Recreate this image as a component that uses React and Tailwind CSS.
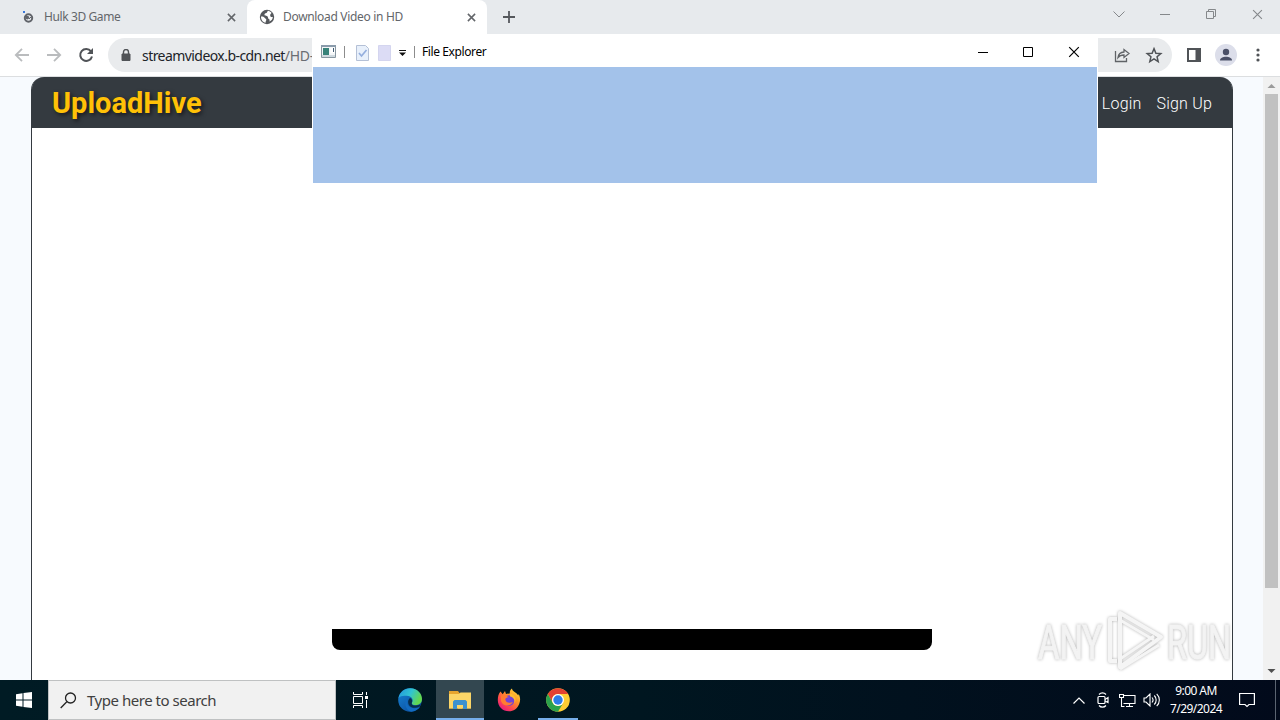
import React from 'react';

const Globe = ({ className }) => (
  <svg viewBox="0 0 16 16" className={className}>
    <circle cx="8" cy="8" r="7.2" fill="#55585c" />
    <path d="M9 1.8c-1.2.8-.4 1.8-1.6 2.3-1.4.4-2.3 1-1.8 2.2.7 1 2.2.2 3 1.2.7 1 0 1.8 1.2 2.4 1.2.4 1 1.5.4 2.6 2.400-.7 3.600-2.500 3.700-4.700-1.400.6-2.600-.2-2.700-1.400-.1-1.200 1-1.500 1.300-2.600C11.500 2.600 10.300 2 9 1.800z" fill="#fff" />
    <path d="M2 7.400c1.600-.1 3 .3 3.600 1.300.5 1 1.700.8 1.700 2 0 1-.8 1.300-.7 3C3.800 13.200 1.900 10.600 2 7.400z" fill="#fff" />
  </svg>
);

const Cross = ({ className }) => (
  <svg viewBox="0 0 10 10" className={className} fill="none" stroke="currentColor">
    <path d="M1 1l8 8M9 1L1 9" />
  </svg>
);

const TabStrip = () => (
  <div className="flex h-[34px] shrink-0 bg-[#e7eaed] text-[12px] text-[#63666a]">
    <div className="flex h-[34px] w-[247px] items-center pl-[21px]">
      <svg viewBox="0 0 14 14" className="h-[14px] w-[14px]">
        <circle cx="7.500" cy="8" r="3.700" fill="none" stroke="#606369" strokeWidth="2" />
        <path d="M5 6l3 1-1 2-2-.5zM8 9l2-2" fill="#606369" stroke="#606369" />
        <path d="M2 1h2v2H2z" fill="#3b78d8" />
      </svg>
      <span className="ml-[9px] w-[183px] whitespace-nowrap tracking-[-0.400px]">Hulk 3D Game</span>
      <Cross className="h-[9px] w-[9px] stroke-[1.700]" />
    </div>
    <div className="flex h-[34px] w-[240px] items-center rounded-t-[8px] bg-white pl-[12px]">
      <Globe className="h-4 w-4" />
      <span className="ml-[8px] w-[184px] whitespace-nowrap tracking-[-0.320px]">Download Video in HD</span>
      <Cross className="h-[9px] w-[9px] stroke-[1.700]" />
    </div>
    <svg viewBox="0 0 12 12" className="ml-[16px] mt-[11px] h-3 w-3" stroke="#55585c" strokeWidth="1.800">
      <path d="M6 0v12M0 6h12" />
    </svg>
    <div className="ml-auto flex h-[28px] items-center pr-[17px] text-[#85888b]">
      <svg viewBox="0 0 12 8" className="h-2 w-3" fill="none" stroke="currentColor"><path d="M.5 1.500L6 7l5.500-5.500" /></svg>
      <svg viewBox="0 0 10 10" className="ml-[35px] h-[10px] w-[10px]" stroke="currentColor"><path d="M0 5.500h10" /></svg>
      <svg viewBox="0 0 10 10" className="ml-[36px] h-[10px] w-[10px]" fill="none" stroke="currentColor">
        <path d="M.5 2.500h7v7h-7zM2.500 2.500v-2h7v7h-2" />
      </svg>
      <Cross className="ml-[36px] h-[11px] w-[11px]" />
    </div>
  </div>
);

const Toolbar = () => (
  <div className="flex h-[43px] shrink-0 items-center border-b border-[#dcdee0] bg-white pl-[14px]">
    <svg viewBox="0 0 16 16" className="h-4 w-4" fill="none" stroke="#babcbe" strokeWidth="1.800"><path d="M15 8H2M8 1.800L1.800 8 8 14.200" /></svg>
    <svg viewBox="0 0 16 16" className="ml-[16px] h-4 w-4" fill="none" stroke="#babcbe" strokeWidth="1.800"><path d="M1 8h13M8 1.800L14.200 8 8 14.200" /></svg>
    <svg viewBox="0 0 16 16" className="ml-[16px] h-4 w-4" fill="none" stroke="#505357" strokeWidth="2">
      <path d="M13 4.300A6 6 0 1 0 14 9.500" />
      <path d="M15 1v6H9z" fill="#505357" stroke="none" />
    </svg>
    <div className="ml-[14px] flex h-[34px] w-[1064px] items-center rounded-full bg-[#e9ebed] pl-[13px] pr-[9px]">
      <svg viewBox="0 0 10 12" className="h-3 w-[10px]">
        <path d="M1 5h8v6.500H1z" fill="#505357" stroke="#505357" strokeWidth="1" />
        <path d="M2.500 5V3a2.500 2.500 0 0 1 5 0v2" fill="none" stroke="#505357" strokeWidth="1.400" />
      </svg>
      <span className="ml-[11px] whitespace-nowrap text-[14px] tracking-[-0.560px] text-[#202328]">
        streamvideox.b-cdn.net<span className="tracking-[-0.300px] text-[#696d72]">/HD-</span>
      </span>
      <svg viewBox="0 0 16 16" className="ml-auto h-4 w-4" fill="none" stroke="#606367" strokeWidth="1.300">
        <path d="M1.500 4v10.500h11V11M4 10.500c.5-3.800 2.500-5.300 6-5.500V2.500L15 6.500l-5 4V8c-3 0-4.600.8-6 2.500z" />
      </svg>
      <svg viewBox="0 0 24 24" className="ml-[15px] h-[18px] w-[18px]" fill="none" stroke="#505357" strokeWidth="2">
        <path d="M12 3.500l2.500 6.100 6.600.5-5 4.300 1.500 6.400-5.600-3.500-5.600 3.500 1.500-6.400-5-4.300 6.600-.5z" />
      </svg>
    </div>
    <svg viewBox="0 0 14 14" className="ml-[15px] h-[14px] w-[14px]"><path d="M0 0h14v14H0z" fill="#505357" /><path d="M2 2h6.500v10H2z" fill="#fff" /></svg>
    <svg viewBox="0 0 22 22" className="ml-[14px] h-[22px] w-[22px]">
      <circle cx="11" cy="11" r="11" fill="#dcdeea" />
      <circle cx="11" cy="8" r="3.200" fill="#4b5068" />
      <path d="M5 16.500c0-5 12-5 12 0z" fill="#4b5068" />
    </svg>
    <svg viewBox="0 0 4 14" className="ml-[19px] h-[14px] w-1" fill="#505357">
      <circle cx="2" cy="2" r="1.600" /><circle cx="2" cy="7" r="1.600" /><circle cx="2" cy="12" r="1.600" />
    </svg>
  </div>
);

const Page = () => (
  <div className="flex min-h-0 flex-1 bg-[#f7fafe] pl-[31px]">
    <div className="flex w-[1202px] flex-col rounded-t-[13px] border-x border-[#343a40] bg-white">
      <div className="flex h-[51px] shrink-0 items-center rounded-t-[12px] bg-[#343a40] pl-[20px] pr-[20px]">
        <span className="pt-[2px] font-[Roboto] text-[29px] font-bold leading-none text-[#ffc107] [text-shadow:2px_2px_4px_rgba(0,0,0,0.6)]">UploadHive</span>
        <div className="ml-auto flex gap-[15px] pt-[2px] font-[Roboto] text-[16px] font-light tracking-[0.200px] text-white">
          <span>Login</span>
          <span>Sign Up</span>
        </div>
      </div>
      <div className="flex flex-1 flex-col pl-[300px] pt-[372px]">
        <div className="h-[150px] w-[600px] rounded-[8px] bg-black" />
      </div>
    </div>
    <div className="ml-auto flex w-[17px] flex-col items-center bg-[#f1f1f1]">
      <svg viewBox="0 0 17 17" className="h-[17px] w-[17px]"><path d="M4.500 11h8l-4-4z" fill="#9b9b9b" /></svg>
      <div className="h-[494px] w-[13px] bg-[#c1c1c1]" />
      <svg viewBox="0 0 17 17" className="mt-auto h-[17px] w-[17px]"><path d="M4.500 6h8l-4 4z" fill="#505050" /></svg>
    </div>
  </div>
);

const ExplorerWindow = () => (
  <div className="absolute left-[312px] top-[38px] flex h-[591px] w-[786px] flex-col bg-white px-px">
    <div className="flex h-[29px] shrink-0 items-center pb-[2px] pl-[8px] pr-[17px]">
      <svg viewBox="0 0 15 13" className="h-[13px] w-[15px]">
        <path d="M.5.5h14v12H.5z" fill="#f3f6f8" stroke="#8796a0" />
        <path d="M0 0h15v2H0z" fill="#8a9bab" />
        <path d="M2 3h6v7H2z" fill="#39837a" />
        <path d="M9.500 3h4v5h-4z" fill="#fff" /><path d="M12 3h1v4h-1z" fill="#405b73" />
        <path d="M1 10h13v2H1z" fill="#cfd9df" />
      </svg>
      <div className="ml-[8px] h-3 w-px bg-[#8c8c8c]" />
      <svg viewBox="0 0 13 16" className="ml-[11px] mt-[2px] h-4 w-[13px]" fill="none">
        <path d="M.5.5h9l3 3v12H.5z" fill="#e8f0fb" stroke="#b4c0d6" />
        <path d="M3 8l2.500 3L10.500 5" stroke="#94aedd" strokeWidth="1.700" />
      </svg>
      <svg viewBox="0 0 13 16" className="ml-[9px] mt-[2px] h-4 w-[13px]"><path d="M.5.5h12v15H.5z" fill="#dcdcf5" stroke="#d4d5ef" /></svg>
      <svg viewBox="0 0 7 6" className="ml-[8px] mt-[3px] h-[6px] w-[7px]"><path d="M0 0h7v1H0zM0 2.500h7L3.500 6z" fill="#111" /></svg>
      <div className="ml-[8px] h-3 w-px bg-[#8c8c8c]" />
      <span className="ml-[7px] whitespace-nowrap text-[12px] tracking-[-0.400px] text-black">File Explorer</span>
      <div className="ml-auto flex items-center text-black">
        <svg viewBox="0 0 10 10" className="h-[10px] w-[10px]" stroke="currentColor"><path d="M0 5.500h10" /></svg>
        <svg viewBox="0 0 10 10" className="ml-[35px] h-[10px] w-[10px]" fill="none" stroke="currentColor"><path d="M.5.5h9v9h-9z" /></svg>
        <Cross className="ml-[35px] h-[12px] w-[12px]" />
      </div>
    </div>
    <div className="h-[116px] bg-[#a3c2ea]" />
  </div>
);

const Watermark = () => (
  <svg viewBox="0 0 200 66" className="absolute left-[1034px] top-[608px] h-[66px] w-[200px] [filter:drop-shadow(0_0_1.500px_rgba(0,0,0,0.3))]">
    <g fill="#f3f3f3" stroke="#f3f3f3" strokeWidth="1" fontFamily="Roboto, sans-serif" fontSize="49" fontWeight="400">
      <text x="4" y="51" textLength="64" lengthAdjust="spacingAndGlyphs">ANY</text>
      <text x="133" y="51" textLength="64" lengthAdjust="spacingAndGlyphs">RUN</text>
    </g>
    <g fill="none" stroke="#f5f5f5" strokeWidth="4" strokeLinejoin="round">
      <path d="M83 11h-7v42h7M86 5l41 24-41 30z" />
      <path d="M86 5v46l34-23M86 12l34 20M86 61l39-24" strokeWidth="3" />
    </g>
  </svg>
);

const EdgeIcon = () => (
  <svg viewBox="0 0 24 24" className="h-6 w-6">
    <defs>
      <linearGradient id="edgeTop" x1="0" y1="0" x2="1" y2=".4"><stop stopColor="#2295dd" /><stop offset=".55" stopColor="#31c4d2" /><stop offset="1" stopColor="#63d84f" /></linearGradient>
      <linearGradient id="edgeBody" x1="0" y1="0" x2=".8" y2="1"><stop stopColor="#1785d5" /><stop offset="1" stopColor="#0b4b9c" /></linearGradient>
    </defs>
    <circle cx="12" cy="12" r="11.800" fill="url(#edgeBody)" />
    <path d="M.5 10C2 3.500 7 0 12.500.2 19.500.5 24 5.500 24 11c0 4-3 6.200-6.500 6.200-2.500 0-4.300-1-3.600-2.400 1.600-2 .8-5.800-3.400-6.700C6.500 7.300 2.500 7.500.5 10z" fill="url(#edgeTop)" />
    <path d="M10 9.500c-3 4.500-.5 10.500 6 10.700 2.500.1 5-.8 6.200-1.700-1.500 2.600-5 5-9 5.200C7.500 23 5 13 10 9.500z" fill="#126bc0" />
    <path d="M13.800 14.700c-1 3 4.200 4 8.700 1.500l-.7 2c-5 3-11 1.500-11.600-3.200-.3-2 .3-4 1.800-5 2 .8 2.800 3 1.800 4.700z" fill="#062e4d" />
  </svg>
);

const FolderIcon = () => (
  <svg viewBox="0 0 22 18" className="h-[18px] w-[22px]">
    <path d="M0 0h9l1.500 2H22v15.500H0z" fill="#e6a52f" />
    <path d="M0 3h10l1.500-1.500H22v16H0z" fill="#fbd567" />
    <path d="M4 18v-7.500L5.500 9h11l1.500 1.500V18h-4v-4H8v4z" fill="#3d91ce" />
    <path d="M9 15h4v2.500H9z" fill="#fbd567" />
  </svg>
);

const FirefoxIcon = () => (
  <svg viewBox="0 0 24 24" className="h-6 w-6">
    <defs>
      <linearGradient id="fox" x1="1" y1="0" x2=".2" y2="1"><stop stopColor="#fff04a" /><stop offset=".4" stopColor="#ff9a26" /><stop offset=".72" stopColor="#ff484d" /><stop offset="1" stopColor="#e31587" /></linearGradient>
    </defs>
    <path d="M3.500 3.500l2.200 2.700L8 3l1 3c1.700-.3 3 0 3.800-.7C12.600 3 13.500 1.500 15 .5c0 3 5 4 6.200 7l.5-1.500c1.600 3 2 6.600.4 10.200C20.200 20.500 16.600 23.300 12 23.300 5.500 23.300.8 18.500.8 12c0-3.500.8-6.500 2.700-8.500z" fill="url(#fox)" />
    <circle cx="12" cy="12.500" r="5.300" fill="#7542d6" />
    <path d="M4 7.500c3-1.500 5.500 0 8 1.800-2 0-3 .6-3.700 1.700.3 4 4.500 4.500 7.500 3-1 4-9.800 5.500-11.800-1z" fill="#ff7c31" />
    <path d="M13 5.500c5 1 7 5.500 4.500 10 1-4-1.500-6.500-4.500-7z" fill="#ffbd32" />
  </svg>
);

const ChromeIcon = () => (
  <svg viewBox="0 0 24 24" className="h-6 w-6">
    <circle cx="12" cy="12" r="11.800" fill="#ffcd34" />
    <path d="M1.800 6A11.800 11.800 0 0 1 22.200 6H12a6 6 0 0 0-5.200 9z" fill="#e44133" />
    <path d="M1.800 6A11.800 11.800 0 0 0 12 23.800L17.200 15A6 6 0 0 1 6.800 15z" fill="#2ba24c" />
    <circle cx="12" cy="12" r="6" fill="#fff" />
    <circle cx="12" cy="12" r="4.700" fill="#2d7de9" />
  </svg>
);

const Taskbar = () => (
  <div className="flex h-10 shrink-0 bg-gradient-to-r from-[#001b24] via-[#001620] to-[#020a1b]">
    <div className="flex w-12 items-center justify-center">
      <svg viewBox="0 0 16 16" className="h-4 w-4" fill="#fff"><path d="M0 2.200L6.500 1.300V7.500H0zM7.500 1.100L16 0v7.500H7.500zM0 8.500h6.500v6.200L0 13.800zM7.500 8.500H16V16l-8.500-1.100z" /></svg>
    </div>
    <div className="flex w-[288px] items-center border border-[#bfc1c2] bg-[#f1f1f1] pl-[11px]">
      <svg viewBox="0 0 17 17" className="h-[17px] w-[17px]" fill="none" stroke="#222" strokeWidth="1.300"><circle cx="10.500" cy="6" r="5" /><path d="M6.800 9.800L.7 16" /></svg>
      <span className="ml-[10px] whitespace-nowrap text-[15px] tracking-[-0.470px] text-[#404040]">Type here to search</span>
    </div>
    <div className="flex w-[48px] items-center justify-center">
      <svg viewBox="0 0 17 16" className="h-4 w-[17px]" fill="none" stroke="#fff" strokeWidth="1">
        <path d="M1.500 0v2.500h9V0M1.500 16v-2.500h9V16M1.500 4.500h9v7h-9zM14.500 0v3M14.500 8v8" /><path d="M13 4h3v3h-3z" fill="#fff" stroke="none" />
      </svg>
    </div>
    <div className="flex w-[52px] items-center justify-center pr-px"><EdgeIcon /></div>
    <div className="flex w-12 items-center justify-center border-b-2 border-[#76aeea] bg-[#334750] pt-[2px]"><FolderIcon /></div>
    <div className="flex w-[50px] items-center justify-center"><FirefoxIcon /></div>
    <div className="ml-[4px] flex w-10 items-center justify-center border-b-2 border-[#76aeea] pt-[2px]"><ChromeIcon /></div>
    <div className="ml-auto flex items-center text-white">
      <svg viewBox="0 0 12 7" className="h-[7px] w-3" fill="none" stroke="currentColor" strokeWidth="1.200"><path d="M.5 6.500L6 1l5.500 5.500" /></svg>
      <svg viewBox="0 0 12 16" className="ml-[12px] h-4 w-3" fill="none" stroke="currentColor" strokeWidth="1.200">
        <rect x="1" y="4.500" width="7" height="7" rx="1" /><path d="M8 7.500L11 5.500v5L8 9M2 2.500C4 .4 7 .4 9 2.500M2 13.500c2 2.200 5 2.200 7 0" />
      </svg>
      <svg viewBox="0 0 17 15" className="ml-[10px] h-[15px] w-[17px]" fill="none" stroke="currentColor" strokeWidth="1.100">
        <path d="M5 2.500h11v8H4.500M10.500 10.500v3M7 13.500h7M.5 1.500h4v3h-4zM2.500 4.500v9h3" />
      </svg>
      <svg viewBox="0 0 17 14" className="ml-[7px] h-[14px] w-[17px]" fill="none" stroke="currentColor" strokeWidth="1.100">
        <path d="M1 5h2l4-4v12L3 9H1zM9 4.500c1.300 1.500 1.300 3.500 0 5M11.300 2.500c2.500 2.500 2.500 6.500 0 9M13.700.8c3.500 3.500 3.500 8.900 0 12.400" />
      </svg>
      <div className="ml-[9px] flex w-[54px] flex-col items-center whitespace-nowrap text-[12px] leading-[18px] tracking-[-0.550px]">
        <span>9:00 AM</span>
        <span>7/29/2024</span>
      </div>
      <svg viewBox="0 0 16 16" className="ml-[16px] h-4 w-4" fill="none" stroke="currentColor" strokeWidth="1.200"><path d="M.6 1.500h14.800v11H10l-2 2-2-2H.6z" /></svg>
      <div className="ml-[20px] mr-[4px] h-10 w-px bg-[#5b6471]" />
    </div>
  </div>
);

const App = () => (
  <div className="relative flex h-[720px] w-[1280px] flex-col overflow-hidden bg-white font-['Noto_Sans',sans-serif]">
    <TabStrip />
    <Toolbar />
    <Page />
    <Taskbar />
    <ExplorerWindow />
    <Watermark />
  </div>
);

export default App;
